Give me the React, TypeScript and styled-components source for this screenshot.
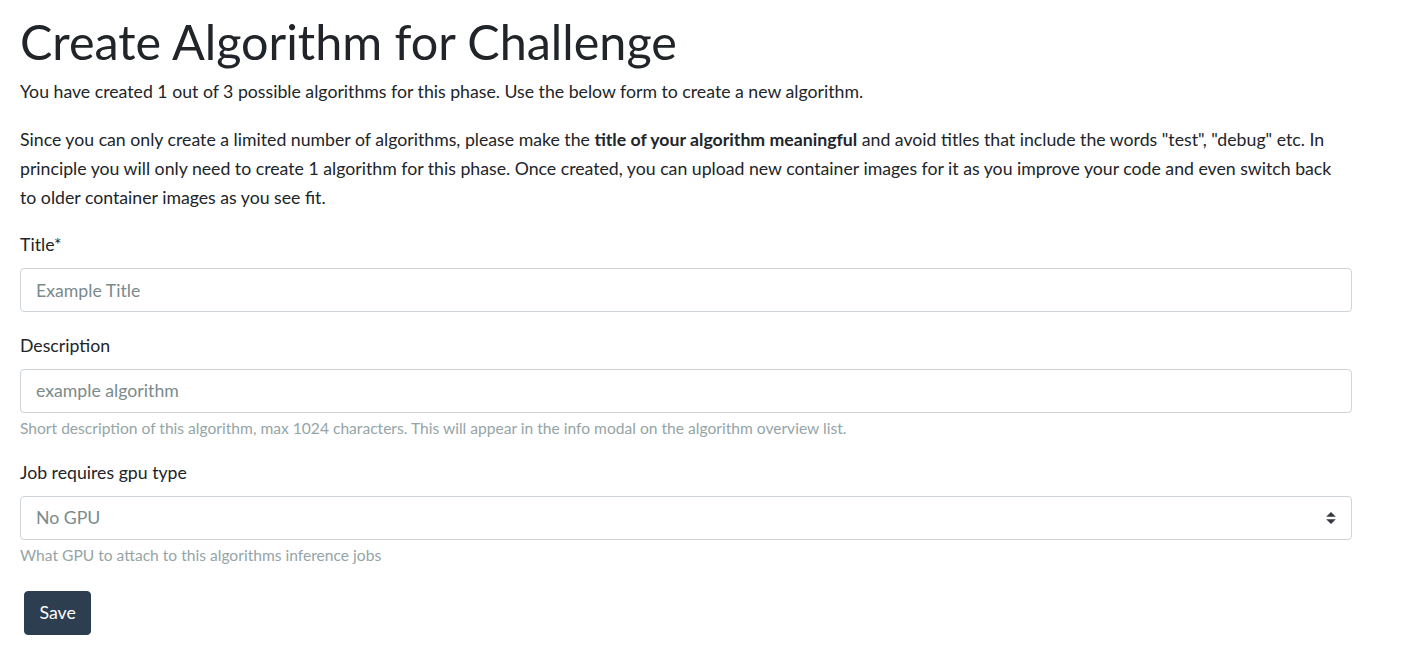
import React from "react";
import styled, { createGlobalStyle } from "styled-components";

const GlobalStyle = createGlobalStyle`
  html, body { margin: 0; padding: 0; background: #fff; }
  body {
    font-family: Lato, "Noto Sans", sans-serif;
    color: #212529;
    font-size: 17.7px;
    line-height: 29px;
  }
  * { box-sizing: border-box; }
`;

const Page = styled.main`
  padding: 0 58px 0 20px;
  width: 1410px;
`;

const Heading = styled.h1`
  margin: 10px 0 0;
  font-size: 48.5px;
  font-weight: 400;
  line-height: 62px;
  color: #212529;
`;

const Para = styled.p<{ $mt?: number }>`
  margin: ${(p) => p.$mt ?? 0}px 0 0;
`;

const Form = styled.form`
  margin-top: 18px;
  display: flex;
  flex-direction: column;
`;

const Group = styled.div`
  display: flex;
  flex-direction: column;
  margin-bottom: 18.5px;
`;

const Label = styled.label`
  display: block;
  margin-bottom: 9px;
`;

const Input = styled.input`
  height: 44px;
  width: 100%;
  border: 1px solid #ced4da;
  border-radius: 4px;
  padding: 0 15px;
  font-family: inherit;
  font-size: 17.7px;
  color: #212529;
  &::placeholder { color: #7b8a8b; opacity: 1; }
`;

const SelectWrap = styled.div`
  position: relative;
  height: 44px;
  border: 1px solid #ced4da;
  border-radius: 4px;
  display: flex;
  align-items: center;
  padding: 0 15px;
  color: #7b8a8b;
`;

const Arrow = styled.svg`
  position: absolute;
  right: 15px;
  top: 50%;
  transform: translateY(-50%);
`;

const Help = styled.small`
  display: block;
  margin-top: 4.5px;
  font-size: 15.6px;
  line-height: 22px;
  color: #95a5a6;
`;

const SaveButton = styled.button`
  align-self: flex-start;
  margin: 6px 0 0 4px;
  height: 44px;
  padding: 0 14.5px;
  background: #2c3e50;
  color: #fff;
  border: 1px solid #2c3e50;
  border-radius: 4px;
  font-family: inherit;
  font-size: 17.7px;
`;

export default function App() {
  return (
    <>
      <GlobalStyle />
      <Page>
        <Heading>Create Algorithm for Challenge</Heading>
        <Para $mt={5}>
          You have created 1 out of 3 possible algorithms for this phase. Use the below form to create a new algorithm.
        </Para>
        <Para $mt={19}>
          Since you can only create a limited number of algorithms, please make the{" "}
          <b>title of your algorithm meaningful</b> and avoid titles that include the words "test", "debug" etc. In
          principle you will only need to create 1 algorithm for this phase. Once created, you can upload new container
          images for it as you improve your code and even switch back to older container images as you see fit.
        </Para>
        <Form onSubmit={(e) => e.preventDefault()}>
          <Group>
            <Label>Title*</Label>
            <Input placeholder="Example Title" />
          </Group>
          <Group>
            <Label>Description</Label>
            <Input placeholder="example algorithm" />
            <Help>
              Short description of this algorithm, max 1024 characters. This will appear in the info modal on the
              algorithm overview list.
            </Help>
          </Group>
          <Group>
            <Label>Job requires gpu type</Label>
            <SelectWrap>
              No GPU
              <Arrow width="10" height="12" viewBox="0 0 4 5">
                <path d="M2 0L0 2h4zm0 5L0 3h4z" fill="#343a40" />
              </Arrow>
            </SelectWrap>
            <Help>What GPU to attach to this algorithms inference jobs</Help>
          </Group>
          <SaveButton type="submit">Save</SaveButton>
        </Form>
      </Page>
    </>
  );
}
